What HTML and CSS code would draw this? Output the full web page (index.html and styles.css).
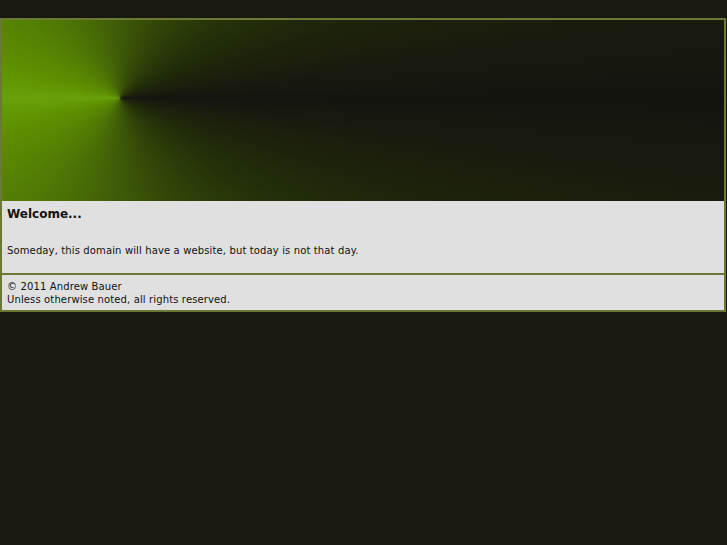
FILE: index.html
```
<!DOCTYPE html>
<html>
<head>
<meta charset="utf-8">
<title>Welcome</title>
<link rel="stylesheet" href="styles.css">
</head>
<body>
<div class="page">
  <div class="header"></div>
  <div class="content">
    <h1 class="title">Welcome...</h1>
    <p class="text">Someday, this domain will have a website, but today is not that day.</p>
  </div>
  <div class="footer">
    <div class="line">&copy; 2011 Andrew Bauer</div>
    <div class="line">Unless otherwise noted, all rights reserved.</div>
  </div>
</div>
</body>
</html>
```
FILE: styles.css
```
html, body {
  margin: 0;
  padding: 0;
  background: #181810;
}
body {
  font-family: "DejaVu Sans", Verdana, sans-serif;
  font-size: 10px;
  letter-spacing: 0.13px;
  color: #111;
}
.page {
  margin: 18px 1px 0 0;
  border: 2px solid #6a7a35;
}
.header {
  height: 181px;
  background: conic-gradient(from 90deg at 118px 78px,
    #141410 0deg, #1b1f0c 12deg, #222d09 30deg, #2e4008 55deg, #3e5a08 90deg,
    #4f7805 130deg, #5e9000 165deg, #68a00a 180deg, #5e9000 195deg,
    #4f7805 230deg, #3e5a08 270deg, #2e4008 305deg, #222d09 330deg, #1b1f0c 348deg, #141410 360deg);
}
.content {
  background: #e0e0e0;
  padding: 6px 5px 0;
  height: 66px;
  border-bottom: 2px solid #6a7a35;
}
.title {
  margin: 0;
  font-size: 12px;
  font-weight: bold;
  letter-spacing: 0;
  line-height: 14px;
}
.text {
  margin: 23px 0 0;
  line-height: 14px;
}
.footer {
  background: #e0e0e0;
  padding: 5px 5px 4px;
  height: 26px;
}
.line {
  line-height: 13px;
}
```
